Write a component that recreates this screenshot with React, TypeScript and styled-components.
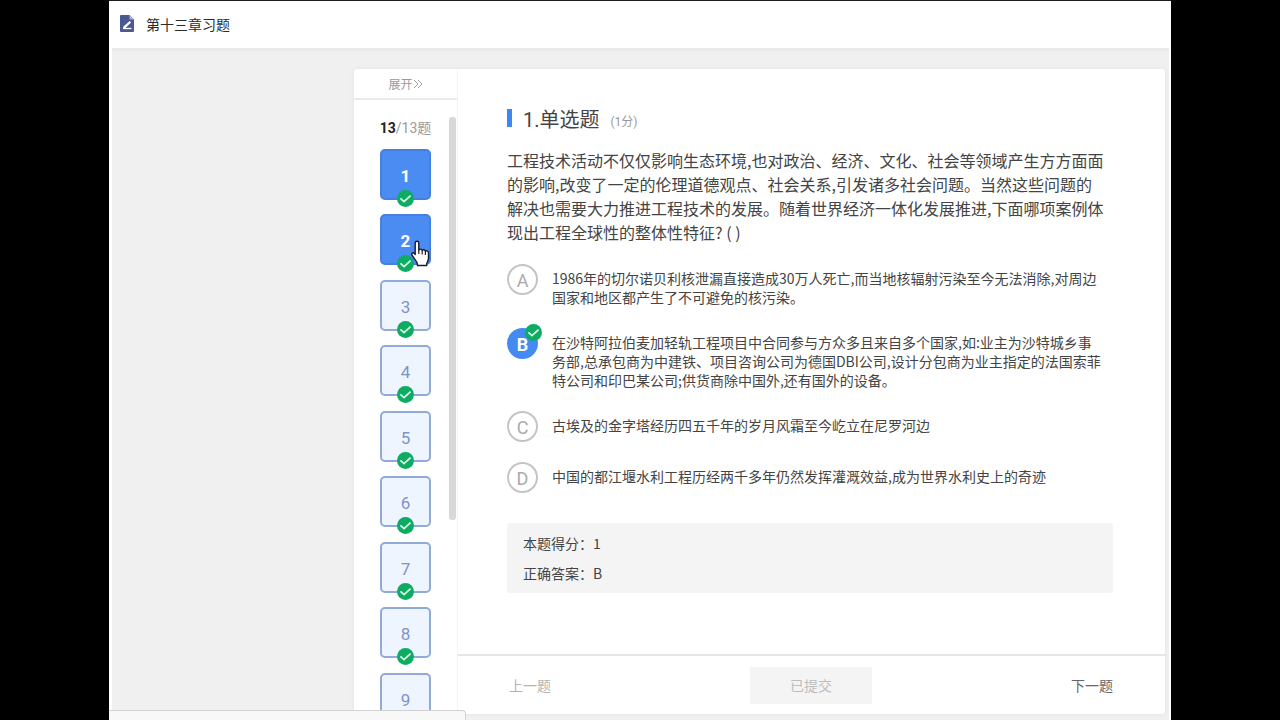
import React, { useState } from 'react';
import styled, { createGlobalStyle, css } from 'styled-components';

const GlobalStyle = createGlobalStyle`
  *, *::before, *::after { box-sizing: border-box; }
  body {
    margin: 0;
    background: #000;
    color: #444;
    font: 14px/20px "Noto Sans CJK SC", "Liberation Sans", sans-serif;
  }
  button { font: inherit; padding: 0; border: 0; background: none; }
  h1, h2, p, ol, ul, fieldset, dl, dd { margin: 0; padding: 0; border: 0; font-weight: 400; }
  ol, ul { list-style: none; }
`;

const Screen = styled.div`
  position: relative;
  display: flex;
  flex-direction: column;
  height: 100vh;
  margin: 0 109px;
  overflow: hidden;
  background: #fff;
  border-top: 1px solid #1c1c1c;
`;

const Header = styled.header`
  display: flex;
  flex: none;
  align-items: center;
  gap: 12px;
  height: 47px;
  padding: 0 11px 2px;
`;

const PageTitle = styled.h1`
  font-size: 14px;
  line-height: 20px;
  color: #2b2b2b;
`;

const Backdrop = styled.div`
  display: flex;
  flex: 1;
  min-height: 0;
  margin: 0 2px 0 3px;
  padding: 18px 4px 6px 242px;
  background: #f0f0f0;
  border-top: 3px solid #eaeaea;
`;

const Card = styled.main`
  display: flex;
  flex: 1;
  min-width: 0;
  background: #fff;
  border-radius: 3px;
  box-shadow: 0 0 4px #e2e2e2;
`;

const Sidebar = styled.nav`
  position: relative;
  display: flex;
  flex: none;
  flex-direction: column;
  width: 104px;
  overflow: hidden;
  border-right: 1px solid #f4f4f4;
`;

const Expand = styled.button`
  display: flex;
  flex: none;
  align-items: center;
  justify-content: center;
  height: 31px;
  color: #9a9a9a;
  font-size: 12px;
  border-bottom: 2px solid #ebebeb;
`;

const Progress = styled.p`
  flex: none;
  padding: 18px 0 11px;
  color: #9a9a9a;
  font-family: Roboto, "Noto Sans CJK SC", sans-serif;
  font-size: 14px;
  line-height: 20px;
  text-align: center;
  strong { color: #222; }
`;

const QuestionList = styled.ol`
  flex: 1;
  min-height: 0;
  margin: 0 auto;
`;

const QuestionItem = styled.li`
  position: relative;
  margin-bottom: 14px;
  &:nth-child(even) { margin-bottom: 15px; }
`;

const QuestionButton = styled.button<{ $active: boolean }>`
  display: block;
  width: 51px;
  height: 51px;
  padding-top: 4px;
  color: #7d93cb;
  font-family: Roboto, sans-serif;
  font-size: 17px;
  line-height: 43px;
  background: #eff5fe;
  border: 2px solid #8fabd9;
  border-radius: 5px;
  ${p => p.$active && css`
    color: #fff;
    font-weight: 700;
    background: #4b8cf3;
    border-color: #4580de;
  `}
`;

const ListBadge = styled.span`
  position: absolute;
  bottom: -7px;
  left: 17px;
  display: flex;
`;

const Pointer = styled.svg`
  position: absolute;
  top: 24px;
  left: 30px;
`;

const ScrollThumb = styled.span`
  position: absolute;
  top: 48px;
  right: 1px;
  width: 7px;
  height: 403px;
  background: #d8d8d8;
  border-radius: 3px;
`;

const Content = styled.div`
  display: flex;
  flex: 1;
  flex-direction: column;
  min-width: 0;
`;

const Question = styled.section`
  flex: 1;
  min-height: 0;
  padding: 39px 52px 0 49px;
`;

const QuestionTitle = styled.h2`
  display: flex;
  align-items: center;
  margin-bottom: 16px;
  color: #444;
  font-family: Roboto, "Noto Sans CJK SC", sans-serif;
  font-size: 20px;
  line-height: 24px;
  &::before {
    content: "";
    align-self: flex-start;
    width: 5px;
    height: 18px;
    margin: 1px 11px 0 0;
    background: #3f86f5;
  }
`;

const Points = styled.small`
  margin-left: 11px;
  padding-top: 4px;
  color: #999;
  font-size: 12px;
  line-height: 20px;
`;

const Stem = styled.p`
  margin-bottom: 20px;
  font-size: 16px;
  line-height: 24px;
`;

const Options = styled.fieldset`
  display: flex;
  flex-direction: column;
  gap: 20px;
  min-width: 0;
`;

const Option = styled.label`
  position: relative;
  display: flex;
  gap: 14px;
  min-height: 31px;
`;

const OptionInput = styled.input`
  position: absolute;
  width: 31px;
  height: 31px;
  margin: 0;
  opacity: 0;
`;

const Letter = styled.span<{ $picked: boolean }>`
  position: relative;
  flex: none;
  width: 31px;
  height: 31px;
  color: #aaa;
  font-family: Roboto, sans-serif;
  font-size: 18px;
  line-height: 30px;
  text-align: center;
  border: 2px solid #c4c4c4;
  border-radius: 50%;
  ${p => p.$picked && css`
    color: #fff;
    font-weight: 700;
    background: #448af2;
    border-color: #448af2;
  `}
`;

const LetterBadge = styled.span`
  position: absolute;
  top: -6px;
  right: -6px;
  display: flex;
`;

const OptionText = styled.span`
  padding: 5px 0 1px;
  line-height: 19px;
`;

const Result = styled.dl`
  margin-top: 30px;
  padding: 5px 16px;
  line-height: 30px;
  background: #f4f4f4;
  border-radius: 3px;
`;

const ResultRow = styled.div`
  display: flex;
`;

const Footer = styled.footer`
  display: flex;
  flex: none;
  align-items: center;
  justify-content: space-between;
  height: 60px;
  padding: 0 52px 0 51px;
  border-top: 2px solid #e6e6e6;
`;

const StepButton = styled.button`
  color: #666;
  &:disabled { color: #b4b4b4; }
`;

const SubmitButton = styled.button`
  width: 122px;
  height: 37px;
  color: #bdbdbd;
  background: #f4f4f4;
`;

const StatusBar = styled.div`
  position: absolute;
  bottom: 0;
  left: 0;
  width: 357px;
  height: 10px;
  background: #f8f8f8;
  border: solid #d2d2d2;
  border-width: 1px 1px 0 0;
  border-radius: 0 4px 0 0;
`;

const Check = ({ size = 17 }: { size?: number }) => (
  <svg width={size} height={size} viewBox="0 0 17 17" aria-hidden="true">
    <circle cx="8.5" cy="8.5" r="8.5" fill="#0eab62" />
    <path d="M3.4 8.4l3.6 3.2 6.6-6" fill="none" stroke="#d8fbe8" strokeWidth="1.8" />
  </svg>
);

const FileIcon = () => (
  <svg width="14" height="17" viewBox="0 0 14 17" aria-hidden="true">
    <path d="M1 0h8.5L14 4.5V16a1 1 0 0 1-1 1H1a1 1 0 0 1-1-1V1a1 1 0 0 1 1-1z" fill="#4c5891" />
    <path d="M9.5 0L14 4.5H9.5z" fill="#a9b1d4" />
    <path d="M2.8 14l.7-2.4 6.2-5.6 1.4 1.5-6 5.7z" fill="#fff" />
    <path d="M3.2 13.5H11.5" stroke="#fff" strokeWidth="1.3" />
  </svg>
);

const options: { key: string; lines: string[] }[] = [
  { key: 'A', lines: ['1986年的切尔诺贝利核泄漏直接造成30万人死亡,而当地核辐射污染至今无法消除,对周边', '国家和地区都产生了不可避免的核污染。'] },
  { key: 'B', lines: ['在沙特阿拉伯麦加轻轨工程项目中合同参与方众多且来自多个国家,如:业主为沙特城乡事', '务部,总承包商为中建铁、项目咨询公司为德国DBI公司,设计分包商为业主指定的法国索菲', '特公司和印巴某公司;供货商除中国外,还有国外的设备。'] },
  { key: 'C', lines: ['古埃及的金字塔经历四五千年的岁月风霜至今屹立在尼罗河边'] },
  { key: 'D', lines: ['中国的都江堰水利工程历经两千多年仍然发挥灌溉效益,成为世界水利史上的奇迹'] },
];

const stem = [
  '工程技术活动不仅仅影响生态环境,也对政治、经济、文化、社会等领域产生方方面面',
  '的影响,改变了一定的伦理道德观点、社会关系,引发诸多社会问题。当然这些问题的',
  '解决也需要大力推进工程技术的发展。随着世界经济一体化发展推进,下面哪项案例体',
  '现出工程全球性的整体性特征? ( )',
];

const Lines = ({ lines }: { lines: string[] }) => (
  <>
    {lines.map((line, i) => (
      <React.Fragment key={line}>
        {i > 0 && <br />}
        {line}
      </React.Fragment>
    ))}
  </>
);

export default function App() {
  const [picked, setPicked] = useState('B');
  return (
    <>
      <GlobalStyle />
      <Screen>
        <Header>
          <FileIcon />
          <PageTitle>第十三章习题</PageTitle>
        </Header>
        <Backdrop>
          <Card>
            <Sidebar>
              <Expand type="button">
                展开
                <svg width="10" height="10" viewBox="0 0 10 10" fill="none" stroke="#a0a0a0" aria-hidden="true">
                  <path d="M1 1l4 4-4 4M5 1l4 4-4 4" />
                </svg>
              </Expand>
              <Progress><strong>13</strong>/13题</Progress>
              <QuestionList>
                {[1, 2, 3, 4, 5, 6, 7, 8, 9].map(n => (
                  <QuestionItem key={n}>
                    <QuestionButton type="button" $active={n < 3}>{n}</QuestionButton>
                    <ListBadge><Check /></ListBadge>
                    {n === 2 && (
                      <Pointer width="21" height="31" viewBox="0 0 21 31" aria-hidden="true">
                        <path
                          d="M5.2 5.2c0-2.7 3.6-2.7 3.6 0v7c.3-1.6 3.2-1.5 3.4.4.5-1.3 3-1.1 3.2.7.7-1 3.1-.7 3.1 1.5v5.4c0 2.6-1.8 3.9-1.8 6v1.3H7.4v-1.3C7.4 23.5 3.6 20.2 2 17.2c-.9-1.9 1-3.2 2.3-1.8l.9 1.1z"
                          fill="#fff" stroke="#1b1b2b" strokeWidth="1.4" strokeLinejoin="round"
                        />
                        <path d="M8.8 12v4M12.2 13v3.5M15.4 13.5V17" stroke="#1b1b2b" strokeWidth="1.2" />
                      </Pointer>
                    )}
                  </QuestionItem>
                ))}
              </QuestionList>
              <ScrollThumb />
            </Sidebar>
            <Content>
              <Question>
                <QuestionTitle>1.单选题<Points>(1分)</Points></QuestionTitle>
                <Stem><Lines lines={stem} /></Stem>
                <Options>
                  {options.map(({ key, lines }) => (
                    <Option key={key}>
                      <OptionInput type="radio" name="answer" value={key} checked={picked === key} onChange={() => setPicked(key)} />
                      <Letter $picked={picked === key}>
                        {key}
                        {picked === key && <LetterBadge><Check /></LetterBadge>}
                      </Letter>
                      <OptionText><Lines lines={lines} /></OptionText>
                    </Option>
                  ))}
                </Options>
                <Result>
                  <ResultRow><dt>本题得分：</dt><dd>1</dd></ResultRow>
                  <ResultRow><dt>正确答案：</dt><dd>B</dd></ResultRow>
                </Result>
              </Question>
              <Footer>
                <StepButton type="button" disabled>上一题</StepButton>
                <SubmitButton type="button" disabled>已提交</SubmitButton>
                <StepButton type="button">下一题</StepButton>
              </Footer>
            </Content>
          </Card>
        </Backdrop>
        <StatusBar />
      </Screen>
    </>
  );
}
